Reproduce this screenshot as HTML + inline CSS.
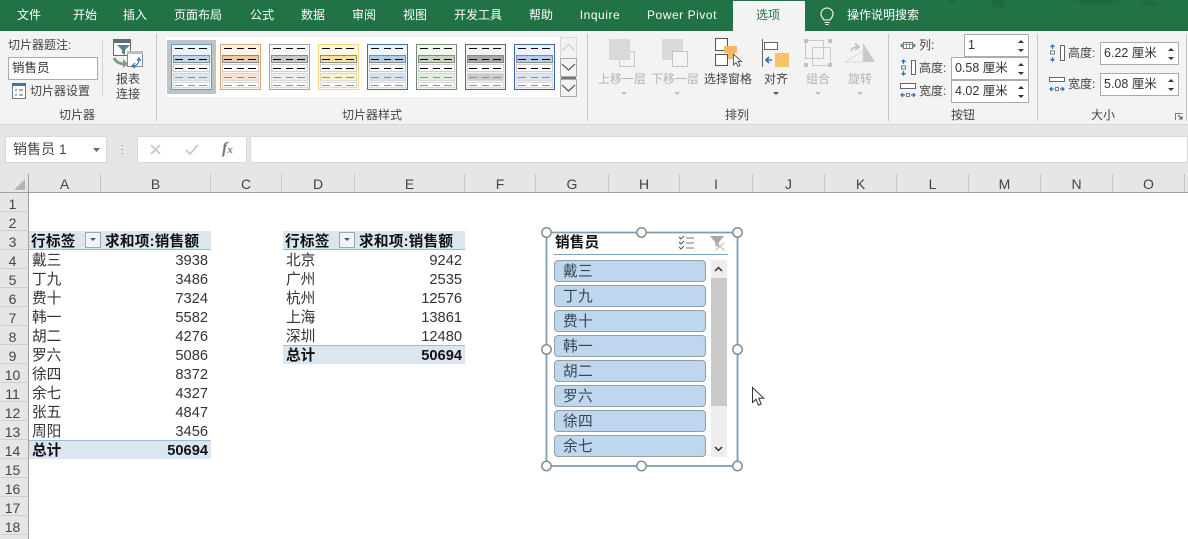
<!DOCTYPE html>
<html lang="zh"><head><meta charset="utf-8"><title>Excel</title>
<style>
html,body{margin:0;padding:0;background:#fff}
#p{position:relative;width:1188px;height:539px;overflow:hidden;background:#fff;font-family:"Liberation Sans","Noto Sans CJK SC",sans-serif;font-size:12px;color:#333}
#p div{position:absolute;white-space:nowrap}
.t{top:7px;height:16px;line-height:16px;color:#fff;font-size:12px;transform:translateX(-50%)}
.r{line-height:16px;height:16px;font-size:12px;color:#444}
.c{transform:translateX(-50%)}
.g{color:#b3b3b3}
.sp{width:1px;background:#c6c6c6}
.inp{background:#fff;border:1px solid #ababab;box-sizing:border-box;line-height:21px;font-size:12.5px;color:#333;padding-left:3px}
.ch{top:174px;height:18px;line-height:20px;font-size:14px;color:#444;text-align:center;border-right:1px solid #c6c6c6;box-sizing:border-box}
.rh{left:0;width:29px;height:19px;line-height:22px;font-size:14px;color:#444;text-align:center;border-right:1px solid #9f9f9f;border-bottom:1px solid #cfcfcf;box-sizing:border-box;background:#e6e6e6;padding-right:3px}
.k{height:19px;line-height:19px;font-size:14.67px;color:#333;transform:translateY(2px)}
.n{height:19px;line-height:19px;font-size:14.67px;color:#333;text-align:right;transform:translateY(2px)}
.b{font-weight:bold;color:#111}
.hd{background:#dce6f1}
.it{left:554px;width:152px;height:22px;box-sizing:border-box;background:#bdd7ee;border:1px solid #979da3;border-radius:4px;line-height:22px;font-size:14.67px;color:#3a4550;padding-left:8px;letter-spacing:.3px}
</style></head><body><div id="p">
<!-- tab bar -->
<div style="left:0;top:0;width:1188px;height:31px;background:#217346"></div>
<div style="left:733px;top:1px;width:72px;height:30px;background:#f3f3f3"></div>
<div class="t" style="left:29px">文件</div>
<div class="t" style="left:85px">开始</div>
<div class="t" style="left:135px">插入</div>
<div class="t" style="left:198px">页面布局</div>
<div class="t" style="left:262px">公式</div>
<div class="t" style="left:313px">数据</div>
<div class="t" style="left:364px">审阅</div>
<div class="t" style="left:415px">视图</div>
<div class="t" style="left:478px">开发工具</div>
<div class="t" style="left:541px">帮助</div>
<div class="t" style="left:600px;letter-spacing:.55px">Inquire</div>
<div class="t" style="left:682px;letter-spacing:.55px">Power Pivot</div>
<div class="t" style="left:768px;color:#217346">选项</div>
<div class="t" style="left:883px">操作说明搜索</div>
<!-- ribbon -->
<div style="left:0;top:31px;width:1188px;height:94px;background:#f3f3f3"></div>
<div style="left:0;top:125px;width:1188px;height:48px;background:#e6e6e6"></div>
<div style="left:0;top:124px;width:1188px;height:1px;background:#d8d8d8"></div>
<div class="sp" style="left:102px;top:40px;height:56px;background:#d4d4d4"></div>
<div class="sp" style="left:156px;top:34px;height:87px"></div>
<div class="sp" style="left:587px;top:34px;height:87px"></div>
<div class="sp" style="left:888px;top:34px;height:87px"></div>
<div class="sp" style="left:1037px;top:34px;height:87px"></div>
<div class="sp" style="left:1186px;top:34px;height:87px"></div>
<div class="r" style="left:8px;top:37px">切片器题注:</div>
<div class="inp" style="left:8px;top:57px;width:90px;height:23px;font-size:12.5px">销售员</div>
<div class="r" style="left:30px;top:83px">切片器设置</div>
<div class="r c" style="left:77px;top:107px">切片器</div>
<div class="r c" style="left:128px;top:71px">报表</div>
<div class="r c" style="left:128px;top:86px">连接</div>
<div class="r c" style="left:372px;top:107px">切片器样式</div>
<div class="r c g" style="left:622px;top:71px">上移一层</div>
<div class="r c g" style="left:675px;top:71px">下移一层</div>
<div class="r c" style="left:728px;top:71px">选择窗格</div>
<div class="r c" style="left:776px;top:71px">对齐</div>
<div class="r c g" style="left:818px;top:71px">组合</div>
<div class="r c g" style="left:860px;top:71px">旋转</div>
<div class="r c" style="left:737px;top:107px">排列</div>
<div class="r" style="left:919px;top:37px">列:</div>
<div class="r" style="left:919px;top:60px">高度:</div>
<div class="r" style="left:919px;top:83px">宽度:</div>
<div class="inp" style="left:964px;top:34px;width:65px;height:23px">1</div>
<div class="inp" style="left:951px;top:57px;width:78px;height:23px">0.58 厘米</div>
<div class="inp" style="left:951px;top:80px;width:78px;height:23px">4.02 厘米</div>
<div class="r c" style="left:963px;top:107px">按钮</div>
<div class="r" style="left:1068px;top:45px">高度:</div>
<div class="r" style="left:1068px;top:76px">宽度:</div>
<div class="inp" style="left:1100px;top:42px;width:79px;height:23px">6.22 厘米</div>
<div class="inp" style="left:1100px;top:73px;width:79px;height:23px">5.08 厘米</div>
<div class="r c" style="left:1103px;top:107px">大小</div>
<!-- gallery bg -->
<div style="left:166px;top:37px;width:394px;height:60px;background:#fff;border-right:1px solid #ddd"></div>
<div style="left:167px;top:40px;width:49px;height:54px;background:#c0c3c6"></div>
<!-- formula bar -->
<div style="left:5px;top:136px;width:102px;height:27px;background:#fff;border:1px solid #d9d9d9;box-sizing:border-box;line-height:25px;font-size:14px;padding-left:7px;color:#444">销售员 1</div>
<div style="left:137px;top:136px;width:110px;height:27px;background:#fff;border:1px solid #d9d9d9;box-sizing:border-box"></div>
<div style="left:250px;top:136px;width:938px;height:27px;background:#fff;border:1px solid #d9d9d9;box-sizing:border-box"></div>
<div style="left:222px;top:140px;height:20px;line-height:20px;font:italic bold 16px 'Liberation Serif',serif;color:#777">f<span style="font-size:11px">x</span></div>
<!-- column headers -->
<div style="left:0;top:173px;width:1188px;height:19px;background:#e6e6e6;border-bottom:1px solid #9f9f9f"></div>
<div class="ch" style="left:28px;width:73px;border-left:1px solid #9f9f9f">A</div>
<div class="ch" style="left:101px;width:110px">B</div>
<div class="ch" style="left:211px;width:71px">C</div>
<div class="ch" style="left:282px;width:73px">D</div>
<div class="ch" style="left:355px;width:110px">E</div>
<div class="ch" style="left:465px;width:71px">F</div>
<div class="ch" style="left:536px;width:73px">G</div>
<div class="ch" style="left:609px;width:71px">H</div>
<div class="ch" style="left:680px;width:73px">I</div>
<div class="ch" style="left:753px;width:72px">J</div>
<div class="ch" style="left:825px;width:72px">K</div>
<div class="ch" style="left:897px;width:72px">L</div>
<div class="ch" style="left:969px;width:72px">M</div>
<div class="ch" style="left:1041px;width:72px">N</div>
<div class="ch" style="left:1113px;width:72px">O</div>
<!-- row headers -->
<div class="rh" style="top:193px">1</div><div class="rh" style="top:212px">2</div><div class="rh" style="top:231px">3</div>
<div class="rh" style="top:250px">4</div><div class="rh" style="top:269px">5</div><div class="rh" style="top:288px">6</div>
<div class="rh" style="top:307px">7</div><div class="rh" style="top:326px">8</div><div class="rh" style="top:345px">9</div>
<div class="rh" style="top:364px">10</div><div class="rh" style="top:383px">11</div><div class="rh" style="top:402px">12</div>
<div class="rh" style="top:421px">13</div><div class="rh" style="top:440px">14</div><div class="rh" style="top:459px">15</div>
<div class="rh" style="top:478px">16</div><div class="rh" style="top:497px">17</div><div class="rh" style="top:516px">18</div>
<div class="rh" style="top:535px">19</div>
<!-- pivot 1 -->
<div class="hd" style="left:29px;top:231px;width:182px;height:19px;border-bottom:1px solid #9bbbdc;box-sizing:border-box"></div>
<div class="hd" style="left:29px;top:440px;width:182px;height:19px;border-top:1px solid #9bbbdc;box-sizing:border-box"></div>
<div class="k b" style="left:31px;top:231px;letter-spacing:.2px">行标签</div>
<div style="left:85px;top:232px;width:16px;height:16px;box-sizing:border-box;background:#f2f5f9;border:1px solid #9aa5b0"></div>
<div class="k b" style="left:105px;top:231px;letter-spacing:.2px">求和项:销售额</div>
<div class="k" style="left:32px;top:250px">戴三</div><div class="n" style="left:120px;width:88px;top:250px">3938</div>
<div class="k" style="left:32px;top:269px">丁九</div><div class="n" style="left:120px;width:88px;top:269px">3486</div>
<div class="k" style="left:32px;top:288px">费十</div><div class="n" style="left:120px;width:88px;top:288px">7324</div>
<div class="k" style="left:32px;top:307px">韩一</div><div class="n" style="left:120px;width:88px;top:307px">5582</div>
<div class="k" style="left:32px;top:326px">胡二</div><div class="n" style="left:120px;width:88px;top:326px">4276</div>
<div class="k" style="left:32px;top:345px">罗六</div><div class="n" style="left:120px;width:88px;top:345px">5086</div>
<div class="k" style="left:32px;top:364px">徐四</div><div class="n" style="left:120px;width:88px;top:364px">8372</div>
<div class="k" style="left:32px;top:383px">余七</div><div class="n" style="left:120px;width:88px;top:383px">4327</div>
<div class="k" style="left:32px;top:402px">张五</div><div class="n" style="left:120px;width:88px;top:402px">4847</div>
<div class="k" style="left:32px;top:421px">周阳</div><div class="n" style="left:120px;width:88px;top:421px">3456</div>
<div class="k b" style="left:32px;top:440px">总计</div><div class="n b" style="left:120px;width:88px;top:440px">50694</div>
<!-- pivot 2 -->
<div class="hd" style="left:283px;top:231px;width:182px;height:19px;border-bottom:1px solid #9bbbdc;box-sizing:border-box"></div>
<div class="hd" style="left:283px;top:345px;width:182px;height:19px;border-top:1px solid #9bbbdc;box-sizing:border-box"></div>
<div class="k b" style="left:285px;top:231px;letter-spacing:.2px">行标签</div>
<div style="left:339px;top:232px;width:16px;height:16px;box-sizing:border-box;background:#f2f5f9;border:1px solid #9aa5b0"></div>
<div class="k b" style="left:359px;top:231px;letter-spacing:.2px">求和项:销售额</div>
<div class="k" style="left:286px;top:250px">北京</div><div class="n" style="left:374px;width:88px;top:250px">9242</div>
<div class="k" style="left:286px;top:269px">广州</div><div class="n" style="left:374px;width:88px;top:269px">2535</div>
<div class="k" style="left:286px;top:288px">杭州</div><div class="n" style="left:374px;width:88px;top:288px">12576</div>
<div class="k" style="left:286px;top:307px">上海</div><div class="n" style="left:374px;width:88px;top:307px">13861</div>
<div class="k" style="left:286px;top:326px">深圳</div><div class="n" style="left:374px;width:88px;top:326px">12480</div>
<div class="k b" style="left:286px;top:345px">总计</div><div class="n b" style="left:374px;width:88px;top:345px">50694</div>
<!-- slicer -->
<div class="k b" style="left:555px;top:232px;letter-spacing:.1px">销售员</div>
<div style="left:554px;top:254px;width:174px;height:1px;background:#7fa3bd"></div>
<div style="left:711px;top:260px;width:16px;height:197px;background:#eeeeee"></div>
<div style="left:711px;top:278px;width:16px;height:128px;background:#c9c9c9"></div>
<div class="it" style="top:260px">戴三</div>
<div class="it" style="top:285px">丁九</div>
<div class="it" style="top:310px">费十</div>
<div class="it" style="top:335px">韩一</div>
<div class="it" style="top:360px">胡二</div>
<div class="it" style="top:385px">罗六</div>
<div class="it" style="top:410px">徐四</div>
<div class="it" style="top:435px">余七</div>
<!-- vector overlay -->
<svg style="position:absolute;left:0;top:0" width="1188" height="539" viewBox="0 0 1188 539">
<defs>
<g id="sw" shape-rendering="crispEdges">
<rect x=".5" y=".5" width="40" height="45" fill="var(--o)" stroke="var(--b)"/>
<rect x="2.500" y="11.500" width="36" height="7" fill="var(--f)" stroke="#8a8a8a"/>
<rect x="2.500" y="20.500" width="36" height="7" fill="#fff" stroke="#d0d0d0"/>
<rect x="2.500" y="29.500" width="36" height="7" fill="var(--l)" stroke="#d8d8d8"/>
<rect x="2.500" y="38.500" width="36" height="5" fill="#fff" stroke="#d8d8d8"/>
<path d="M4 4.500h8M17 4.500h7M28 4.500h8M4 15.500h8M17 15.500h7M28 15.500h8M4 24.500h8M17 24.500h7M28 24.500h8" stroke="#000"/>
<path d="M4 33.500h8M17 33.500h7M28 33.500h8M4 41.500h8M17 41.500h7M28 41.500h8" stroke="#8f8f8f"/>
</g>
<polygon id="up" points="0,3 3,0 6,3" fill="#333"/>
<polygon id="dn" points="0,0 6,0 3,3" fill="#333"/>
</defs>
<!-- green texture -->
<g fill="#1e6a40"><ellipse cx="1098" cy="0" rx="22" ry="5"/><ellipse cx="998" cy="3" rx="6" ry="6"/><ellipse cx="1150" cy="3" rx="7" ry="3"/><ellipse cx="952" cy="1" rx="4" ry="2"/></g>
<!-- lightbulb -->
<g fill="none" stroke="#fff" stroke-width="1.1"><path d="M824 20c-1-2-3-3-3-6a6 6 0 0 1 12 0c0 3-2 4-3 6z"/><path d="M824.500 22.500h5M825.500 24.500h3"/></g>
<!-- swatches -->
<use href="#sw" x="171" y="44" style="--o:#eaf4fb;--b:#6a9ac4;--f:#bdd7ee;--l:#dce6f1"/>
<use href="#sw" x="220" y="44" style="--o:#fdf3e6;--b:#e0a66e;--f:#eccaa8;--l:#f8e3d3"/>
<use href="#sw" x="269" y="44" style="--o:#f8f8f8;--b:#a5a5a5;--f:#c9c9c9;--l:#ededed"/>
<use href="#sw" x="318" y="44" style="--o:#fff9e8;--b:#fcd774;--f:#fbe09a;--l:#fff2cc"/>
<use href="#sw" x="367" y="44" style="--o:#eef4fa;--b:#4472a0;--f:#b0cde6;--l:#d5e3f0"/>
<use href="#sw" x="416" y="44" style="--o:#f2f7f0;--b:#6f8f6f;--f:#c5d4bf;--l:#e2eede"/>
<use href="#sw" x="465" y="44" style="--o:#f2f2f2;--b:#666;--f:#a8a8a8;--l:#ccc"/>
<use href="#sw" x="514" y="44" style="--o:#eef3fb;--b:#4466a8;--f:#b4cdea;--l:#dae5f5"/>
<!-- gallery buttons -->
<g fill="#f3f3f3" stroke="#ababab" shape-rendering="crispEdges"><rect x="560.500" y="37.500" width="16" height="21" stroke="#d8d8d8"/><rect x="560.500" y="58.500" width="16" height="18"/><rect x="560.500" y="79.500" width="16" height="17"/></g>
<path d="M562 51l6.500-6.500L575 51" fill="none" stroke="#cfcfcf" stroke-width="1.2"/>
<path d="M562 64l6.500 6L575 64" fill="none" stroke="#444" stroke-width="1.1"/>
<path d="M561 78h15" stroke="#777" stroke-width="2"/><path d="M562 85l6.500 6L575 85" fill="none" stroke="#444" stroke-width="1.1"/>
<!-- slicer settings icon -->
<g shape-rendering="crispEdges"><rect x="12.500" y="83.500" width="13" height="15" fill="#fff" stroke="#777"/><rect x="12" y="83" width="14" height="3" fill="#3f74b0"/><path d="M15 90h2M19 90h4M15 95h2M19 95h4" stroke="#555"/></g>
<!-- report connections icon -->
<g shape-rendering="crispEdges"><rect x="113.500" y="39.500" width="17" height="16" fill="#fff" stroke="#666"/><rect x="113" y="39" width="18" height="4" fill="#5c6d7d"/><rect x="127.500" y="51.500" width="15" height="15" fill="#fff" stroke="#888"/><rect x="127" y="51" width="16" height="3" fill="#b5bfc9"/></g>
<polygon points="117,45 130,45 125,50 125,55 122,53 122,50" fill="#5f7f8c"/>
<path d="M114 58c2 4 6 6 11 6" fill="none" stroke="#7f9f85" stroke-width="3"/><path d="M123 59l5 5-5 4z" fill="#7f9f85"/>
<path d="M133 66c3 0 6-2 6-7M137 61l2-3 2 3M135 63l-3 3 3 2" fill="none" stroke="#2f6fb0" stroke-width="1.100"/>
<!-- move up / down -->
<g shape-rendering="crispEdges"><rect x="609" y="39" width="21" height="21" fill="#d9d9d9"/><path d="M630 51.500h4.500v15h-15v-6" fill="none" stroke="#c4c4c4"/>
<rect x="662" y="39" width="21" height="21" fill="#d9d9d9"/><rect x="672.500" y="51.500" width="15" height="15" fill="#f3f3f3" stroke="#c4c4c4"/></g>
<path d="M621 92h6l-3 3zM674 92h6l-3 3zM815 92h6l-3 3zM857 92h6l-3 3z" fill="#bdbdbd"/>
<path d="M773 92h6l-3 3z" fill="#555"/>
<!-- selection pane -->
<g shape-rendering="crispEdges"><rect x="715.500" y="38.500" width="12" height="12" fill="#fff" stroke="#555"/><rect x="715.500" y="54.500" width="12" height="11" fill="#fff" stroke="#555"/><rect x="724" y="46" width="13" height="7" fill="#f8b862"/><rect x="728" y="46" width="5" height="13" fill="#f8b862"/></g>
<path d="M733.500 54v11l2.500-2.500 2 4 2-1-2-4h3.500z" fill="#fff" stroke="#555" stroke-width=".9"/>
<!-- align -->
<g shape-rendering="crispEdges"><path d="M762.500 39v28" stroke="#666"/><rect x="764.500" y="42.500" width="13" height="7" fill="#fff" stroke="#666"/><rect x="775" y="53" width="14" height="14" fill="#f8c26a"/></g>
<path d="M772 60h-5M769 57l-3 3 3 3" fill="none" stroke="#2f6fb0" stroke-width="1.600"/>
<!-- group -->
<g fill="none" stroke="#c8c8c8" shape-rendering="crispEdges"><rect x="805.500" y="40.500" width="18" height="18"/><rect x="812.500" y="47.500" width="18" height="18"/></g>
<g fill="#c0c0c0"><rect x="804" y="39" width="4" height="4"/><rect x="828" y="39" width="4" height="4"/><rect x="804" y="63" width="4" height="4"/><rect x="828" y="63" width="4" height="4"/></g>
<!-- rotate -->
<polygon points="863,43 875,62 863,62" fill="#c8c8c8"/><path d="M845.500 62h17.500v-11z" fill="none" stroke="#d6d6d6"/><path d="M851 51c1-3 3-4 6-4M855 43.500l4 3.500-4 3" fill="none" stroke="#bdbdbd" stroke-width="1.600"/>
<!-- size icons -->
<g shape-rendering="crispEdges"><rect x="903.500" y="42.500" width="9" height="6" fill="#fff" stroke="#777"/><path d="M903 44.500h10M906.500 43v5M909.500 43v5" stroke="#999"/>
<rect x="911.500" y="60.500" width="4" height="14" fill="#fff" stroke="#666"/><rect x="1060.500" y="45.500" width="4" height="15" fill="#fff" stroke="#666"/>
<rect x="901.500" y="66" width="4" height="3" fill="#fff" stroke="#777"/><rect x="1050.500" y="51" width="4" height="3" fill="#fff" stroke="#777"/>
<rect x="900.500" y="83.500" width="15" height="5" fill="#fff" stroke="#666"/><rect x="1049.500" y="77.500" width="15" height="4" fill="#fff" stroke="#666"/>
<rect x="906.500" y="93.500" width="3" height="3" fill="#fff" stroke="#777"/><rect x="1055.500" y="87.500" width="3" height="3" fill="#fff" stroke="#777"/></g>
<g fill="none" stroke="#2f6fb0" stroke-width="1.200"><path d="M901 45.500l1-1v2zM915 45.500l-1-1v2z"/><path d="M903.500 60v4M901.500 62l2-2 2 2M903.500 71v4M901.500 73l2 2 2-2"/><path d="M1052.500 45v4M1050.500 47l2-2 2 2M1052.500 57v4M1050.500 59l2 2 2-2"/><path d="M901 95h4M903 93l-2 2 2 2M911 95h4M913 93l2 2-2 2"/><path d="M1050 89h4M1052 87l-2 2 2 2M1060 89h4M1062 87l2 2-2 2"/></g>
<!-- spinners -->
<use href="#up" x="1018" y="40"/><use href="#dn" x="1018" y="49"/>
<use href="#up" x="1018" y="63"/><use href="#dn" x="1018" y="72"/>
<use href="#up" x="1018" y="86"/><use href="#dn" x="1018" y="95"/>
<use href="#up" x="1168" y="48"/><use href="#dn" x="1168" y="57"/>
<use href="#up" x="1168" y="79"/><use href="#dn" x="1168" y="88"/>
<!-- dialog launcher -->
<g fill="none" stroke="#777" shape-rendering="crispEdges"><path d="M1175.500 120v-6.500h7"/></g><path d="M1178 115l4 4M1179 119h3v-3" fill="none" stroke="#555"/>
<!-- name box / formula bar -->
<polygon points="93,148 100,148 96.500,152" fill="#666"/>
<path d="M122 145v1M122 149v1M122 153v1" stroke="#aaa" stroke-width="2"/>
<path d="M151 145l9 9M160 145l-9 9" stroke="#c8c8c8" stroke-width="1.800" fill="none"/>
<path d="M186 150l4 4 8-9" stroke="#c8c8c8" stroke-width="1.800" fill="none"/>
<!-- corner triangle -->
<polygon points="25,179 25,190 14,190" fill="#b5b5b5"/>
<!-- pivot dropdown arrows -->
<polygon points="90,238 96,238 93,241" fill="#555"/><polygon points="344,238 350,238 347,241" fill="#555"/>
<!-- slicer frame -->
<rect x="546.500" y="232.500" width="191" height="233.500" fill="none" stroke="#7f9db3" stroke-width="1.800"/>
<!-- slicer header icons -->
<g fill="none" stroke="#555" stroke-width="1"><path d="M686 238h8M686 243h8M686 248h8" shape-rendering="crispEdges" stroke="#777"/><path d="M679 237l2 2 3-3M679 242l2 2 3-3M679 247l2 2 3-3"/></g>
<polygon points="710,236 724,236 719,242 719,248 715,245 715,242" fill="#a8a8a8"/>
<path d="M716 243l8 7M724 243l-8 7" stroke="#c4c4c4" stroke-width="1.300"/>
<!-- scroll arrows -->
<path d="M715 271l3.500-3.500L722 271M715 447l3.500 3.500L722 447" fill="none" stroke="#333" stroke-width="1.500"/>
<!-- handles -->
<g fill="#fff" stroke="#8c8c8c" stroke-width="1.500"><circle cx="546.500" cy="232.500" r="4.700"/><circle cx="641.500" cy="232.500" r="4.700"/><circle cx="737.500" cy="232.500" r="4.700"/><circle cx="546.500" cy="349.500" r="4.700"/><circle cx="737.500" cy="349.500" r="4.700"/><circle cx="546.500" cy="466" r="4.700"/><circle cx="641.500" cy="466" r="4.700"/><circle cx="737.500" cy="466" r="4.700"/></g>
<!-- cursor -->
<path d="M752.500 387.500v15l3.500-3.300 2.500 6 2.700-1.200-2.500-5.800h5z" fill="#fff" stroke="#333"/>
</svg>
</div></body></html>
